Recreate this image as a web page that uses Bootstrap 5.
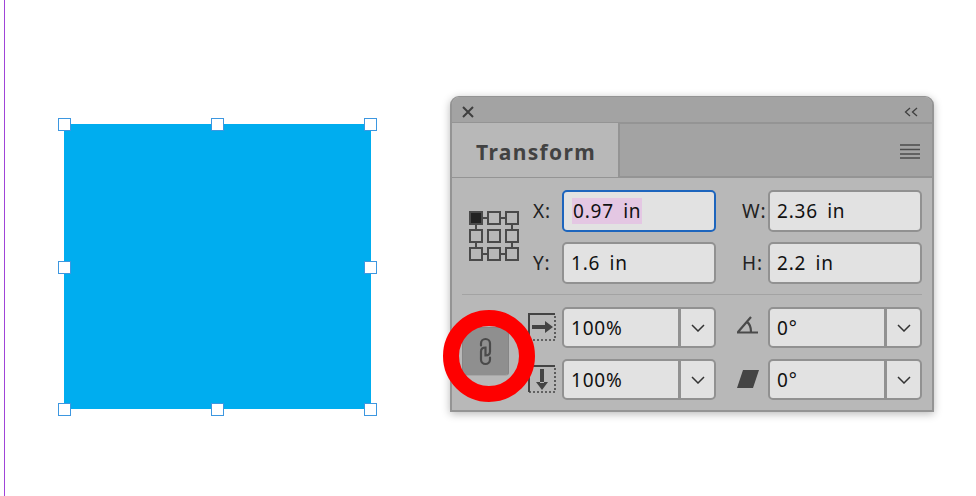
<!DOCTYPE html>
<html lang="en">
<head>
  <meta charset="UTF-8">
  <meta name="viewport" content="width=device-width, initial-scale=1.0">
  <title>Transform</title>
  <link href="https://cdn.jsdelivr.net/npm/bootstrap@5.3.0/dist/css/bootstrap.min.css" rel="stylesheet">
  <style>
    body {
      background: #fff;
      margin: 0;
      overflow: hidden;
      font-family: "Noto Sans", sans-serif;
      color: #111;
    }
    .artboard {
      height: 496px;
      margin-left: 4px;
      border-left: 1px solid #a044d8;
    }
    .shape {
      position: relative;
      flex: 0 0 307px;
      height: 285px;
      margin: 124px 79px 0 59px;
      background: #00adef;
    }
    .handle {
      position: absolute;
      width: 13px;
      height: 13px;
      background: #fff;
      border: 1px solid #3d97e0;
    }
    .h-l { left: -6px; }
    .h-c { left: 147px; }
    .h-r { right: -6px; }
    .h-t { top: -6px; }
    .h-m { top: 137px; }
    .h-b { bottom: -7px; }

    .xf-panel {
      position: relative;
      flex: 0 0 484px;
      height: 316px;
      margin-top: 96px;
      background: #b8b8b8;
      border: 2px solid #949494;
      border-top-width: 1px;
      border-radius: 9px 9px 0 0;
      box-shadow: 0 2px 8px rgba(0, 0, 0, .28);
    }
    .xf-title {
      height: 27px;
      padding: 5px 14px 0 10px;
      background: #a3a3a3;
      border-bottom: 2px solid #949494;
      border-radius: 8px 8px 0 0;
    }
    .xf-tabs {
      height: 54px;
      background: #a3a3a3;
      border-bottom: 2px solid #949494;
    }
    .xf-tabs .nav-link {
      width: 168px;
      height: 54px;
      padding: 13px 0 0 24px;
      background: #b8b8b8;
      border: 0;
      border-right: 2px solid #949494;
      border-radius: 0;
      color: #424242;
      font-size: 21px;
      font-weight: 700;
      letter-spacing: 1.35px;
      line-height: 32px;
    }
    .xf-menu { margin: 2px 12px 0 0; }
    .xf-top {
      height: 117px;
      margin: 0 10px;
      padding-top: 12px;
      border-bottom: 1px solid #a3a3a3;
    }
    .xf-anchor { margin: 21px 0 0 7px; flex: 0 0 50px; }
    .xf-grid-top {
      display: grid;
      grid-template-columns: 29px 154px 52px 154px;
      grid-auto-rows: 42px;
      row-gap: 10px;
      margin-left: 14px;
    }
    .xf-label {
      font-size: 19px;
      letter-spacing: .8px;
      line-height: 42px;
      color: #222;
    }
    .xf-label-r { padding-left: 26px; }
    .xf-field {
      height: 100%;
      padding: 0 0 0 7px;
      background: #e2e2e2;
      border: 2px solid #919191;
      border-radius: 5px;
      color: #111;
      font-size: 19px;
      letter-spacing: .8px;
      word-spacing: 3.5px;
      line-height: 38px;
    }
    .xf-focus { border-color: #1d65bd; }
    .xf-sel { display: inline-block; background: #e4c7e3; line-height: 26px; padding: 0 1px; margin-left: 1px; }
    .xf-bottom {
      display: grid;
      grid-template-columns: 47px 19px 34px 154px 20px 32px 154px;
      grid-auto-rows: 41px;
      row-gap: 11px;
      margin: 12px 0 0 10px;
    }
    .xf-link {
      grid-row: 1 / span 2;
      align-self: center;
      height: 49px;
      margin-top: -4px;
      padding: 0;
      background: #8f8f8f;
      border: 1px solid #868686;
      border-bottom-color: #a8a8a8;
      border-radius: 4px;
    }
    .xf-icon-a { grid-column: 3; margin-top: 6px; }
    .xf-icon-b { grid-column: 6; margin-top: 9px; }
    .xf-combo { height: 41px; }
    .xf-combo .xf-field { flex: 1 1 auto; border-radius: 5px 0 0 5px; }
    .xf-combo .btn {
      flex: 0 0 37px;
      margin-left: -2px;
      padding: 0;
      background: #e2e2e2;
      border: 2px solid #919191;
      border-radius: 0 5px 5px 0;
    }
    .xf-ring {
      position: absolute;
      left: -9px;
      top: 213px;
      width: 92px;
      height: 92px;
      border: 16px solid #fe0000;
      border-radius: 50%;
    }
  </style>
</head>
<body>
  <div class="artboard d-flex align-items-start">
    <div class="shape">
      <span class="handle h-l h-t"></span><span class="handle h-c h-t"></span><span class="handle h-r h-t"></span>
      <span class="handle h-l h-m"></span><span class="handle h-r h-m"></span>
      <span class="handle h-l h-b"></span><span class="handle h-c h-b"></span><span class="handle h-r h-b"></span>
    </div>

    <div class="xf-panel">
      <div class="xf-title d-flex align-items-center justify-content-between">
        <svg width="12" height="12" viewBox="0 0 12 12"><path d="M1 1l10 10M11 1L1 11" stroke="#3f3f3f" stroke-width="2" fill="none"/></svg>
        <svg width="14" height="10" viewBox="0 0 14 10"><path d="M6 1L1.500 5 6 9M13 1L8.500 5 13 9" stroke="#3f3f3f" stroke-width="1.300" fill="none"/></svg>
      </div>

      <div class="xf-tabs d-flex justify-content-between align-items-center">
        <ul class="nav">
          <li class="nav-item"><a class="nav-link active" href="#">Transform</a></li>
        </ul>
        <svg class="xf-menu" width="20" height="15" viewBox="0 0 20 15"><path d="M0 1h20M0 5.500h20M0 10h20M0 14h20" stroke="#4c4c4c" stroke-width="1.600" fill="none"/></svg>
      </div>

      <div class="xf-top d-flex">
        <svg class="xf-anchor" width="50" height="50" viewBox="0 0 50 50">
          <g fill="none" stroke="#4a4a4a" stroke-width="2">
            <path d="M14 7h4M32 7h4M14 43h4M32 43h4M7 14v4M7 32v4M43 14v4M43 32v4"/>
            <rect x="1" y="1" width="12" height="12" fill="#222"/>
            <rect x="19" y="1" width="12" height="12"/>
            <rect x="37" y="1" width="12" height="12"/>
            <rect x="1" y="19" width="12" height="12"/>
            <rect x="19" y="19" width="12" height="12"/>
            <rect x="37" y="19" width="12" height="12"/>
            <rect x="1" y="37" width="12" height="12"/>
            <rect x="19" y="37" width="12" height="12"/>
            <rect x="37" y="37" width="12" height="12"/>
          </g>
        </svg>
        <div class="xf-grid-top">
          <span class="xf-label">X:</span>
          <div class="form-control xf-field xf-focus"><span class="xf-sel">0.97 in</span></div>
          <span class="xf-label xf-label-r">W:</span>
          <div class="form-control xf-field">2.36 in</div>
          <span class="xf-label">Y:</span>
          <div class="form-control xf-field">1.6 in</div>
          <span class="xf-label xf-label-r">H:</span>
          <div class="form-control xf-field">2.2 in</div>
        </div>
      </div>

      <div class="xf-bottom">
        <button class="btn xf-link d-flex align-items-center justify-content-center" type="button">
          <svg width="13" height="29" viewBox="0 0 13 29"><path d="M2 8.500V6.500a4.500 4.500 0 0 1 9 0V14.500q0 4-4.500 4V13M11 20.500V22.500a4.500 4.500 0 0 1-9 0V14.500q0-4 4.500-4V16" stroke="#4a4a4a" stroke-width="2.200" fill="none" stroke-linecap="round"/></svg>
        </button>

        <svg class="xf-icon-a" width="28" height="28" viewBox="0 0 28 28">
          <path d="M27 1H1v26" stroke="#444" stroke-width="2" fill="none"/>
          <path d="M1 27h26V1" stroke="#444" stroke-width="1.600" stroke-dasharray="2 2" fill="none"/>
          <path d="M4 12h14v4H4zM17 8l8 6-8 6z" fill="#444"/>
        </svg>
        <div class="input-group xf-combo flex-nowrap">
          <div class="form-control xf-field">100%</div>
          <button class="btn d-flex align-items-center justify-content-center" type="button">
            <svg width="14" height="8" viewBox="0 0 14 8"><path d="M1 1l6 6 6-6" stroke="#333" stroke-width="1.500" fill="none"/></svg>
          </button>
        </div>
        <svg class="xf-icon-b" width="24" height="20" viewBox="0 0 24 20">
          <path d="M1 16.500h21M2 16L15 1M11 6c3 2 4 6 4 10" stroke="#4a4a4a" stroke-width="2.200" fill="none"/>
        </svg>
        <div class="input-group xf-combo flex-nowrap">
          <div class="form-control xf-field">0°</div>
          <button class="btn d-flex align-items-center justify-content-center" type="button">
            <svg width="14" height="8" viewBox="0 0 14 8"><path d="M1 1l6 6 6-6" stroke="#333" stroke-width="1.500" fill="none"/></svg>
          </button>
        </div>

        <svg class="xf-icon-a" width="28" height="28" viewBox="0 0 28 28">
          <path d="M27 1H1v26" stroke="#444" stroke-width="2" fill="none"/>
          <path d="M1 27h26V1" stroke="#444" stroke-width="1.600" stroke-dasharray="2 2" fill="none"/>
          <path d="M12 4h4v14h-4zM8 17l6 8 6-8z" fill="#444"/>
        </svg>
        <div class="input-group xf-combo flex-nowrap">
          <div class="form-control xf-field">100%</div>
          <button class="btn d-flex align-items-center justify-content-center" type="button">
            <svg width="14" height="8" viewBox="0 0 14 8"><path d="M1 1l6 6 6-6" stroke="#333" stroke-width="1.500" fill="none"/></svg>
          </button>
        </div>
        <svg class="xf-icon-b" width="24" height="22" viewBox="0 0 24 22">
          <path d="M7 2h16l-6 18H1z" fill="#444"/>
        </svg>
        <div class="input-group xf-combo flex-nowrap">
          <div class="form-control xf-field">0°</div>
          <button class="btn d-flex align-items-center justify-content-center" type="button">
            <svg width="14" height="8" viewBox="0 0 14 8"><path d="M1 1l6 6 6-6" stroke="#333" stroke-width="1.500" fill="none"/></svg>
          </button>
        </div>
      </div>

      <div class="xf-ring"></div>
    </div>
  </div>
  <script src="https://cdn.jsdelivr.net/npm/bootstrap@5.3.0/dist/js/bootstrap.bundle.min.js"></script>
</body>
</html>
